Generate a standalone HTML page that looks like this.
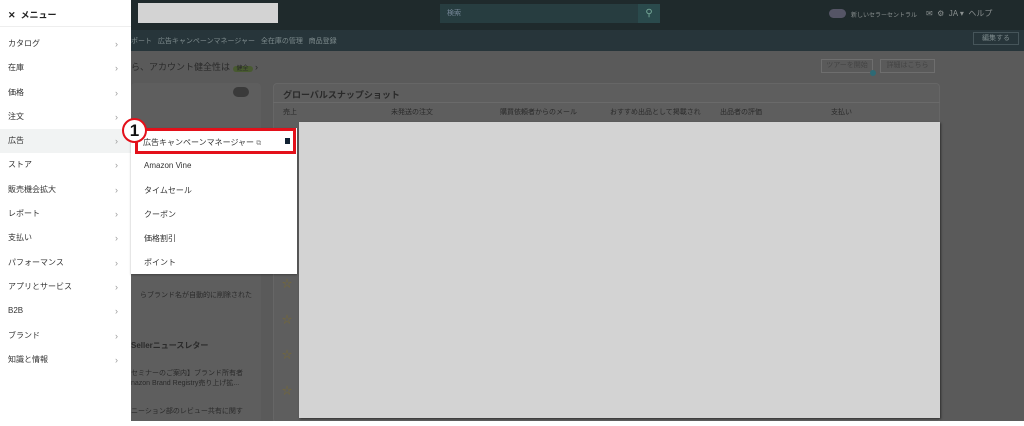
<!DOCTYPE html>
<html><head><meta charset="utf-8"><style>
*{margin:0;padding:0;box-sizing:border-box}
body{width:1024px;height:426px;overflow:hidden;background:#fff;font-family:"Liberation Sans","Noto Sans CJK JP",sans-serif;position:relative}
.a{position:absolute}
.t{color:#333;font-size:8px;white-space:nowrap}
.d{color:#2a2a2a;font-size:7px;white-space:nowrap}
</style></head><body>
<div class="a" style="left:0;top:0;width:1024px;height:30px;background:#1f2a2c"></div>
<div class="a" style="left:0;top:30px;width:1024px;height:21px;background:#27353a"></div>
<div class="a" style="left:0;top:51px;width:1024px;height:370px;background:#5a5a5a"></div>
<div class="a" style="left:138px;top:3px;width:140px;height:20px;background:#d3d3d3"></div>
<div class="a" style="left:440px;top:4px;width:198px;height:19px;background:#273d40"></div>
<div class="a" style="left:638px;top:4px;width:22px;height:19px;background:#2a4a4c;color:#7a9;font-size:10px;text-align:center;line-height:19px">⚲</div>
<div class="a t" style="left:447px;top:8px;color:#789;font-size:7px">検索</div>
<div class="a" style="left:829px;top:9px;width:17px;height:9px;border-radius:5px;background:#556"></div>
<div class="a t" style="left:851px;top:10px;color:#8a9090;font-size:6px">新しいセラーセントラル</div>
<div class="a t" style="left:926px;top:8px;color:#8a9090;font-size:8px">✉ &nbsp;⚙ &nbsp;JA ▾ &nbsp;ヘルプ</div>
<div class="a t" style="left:131px;top:36px;color:#7d8a8c;font-size:7px">ポート &nbsp; 広告キャンペーンマネージャー &nbsp; 全在庫の管理 &nbsp; 商品登録</div>
<div class="a" style="left:973px;top:32px;width:46px;height:13px;border:1px solid #46555a;color:#7d8a8c;font-size:7px;text-align:center;line-height:11px">編集する</div>
<div class="a t" style="left:131px;top:60px;color:#2a2a2a;font-size:9px">ら、アカウント健全性は <span style="background:#485a30;border-radius:6px;padding:0 4px;font-size:6px">健全</span> ›</div>
<div class="a" style="left:821px;top:59px;width:52px;height:14px;border:1px solid #6e6e6e;color:#444;font-size:7px;text-align:center;line-height:12px">ツアーを開始</div>
<div class="a" style="left:880px;top:59px;width:55px;height:14px;border:1px solid #6e6e6e;color:#444;font-size:7px;text-align:center;line-height:12px">詳細はこちら</div>
<div class="a" style="left:870px;top:70px;width:6px;height:6px;border-radius:50%;background:#2e6a75"></div>
<div class="a" style="left:131px;top:83px;width:130px;height:340px;background:#5e5e5e;border-radius:4px"></div>
<div class="a" style="left:273px;top:83px;width:667px;height:340px;background:#5e5e5e;border-radius:4px;border:1px solid #666"></div>
<div class="a t" style="left:283px;top:88px;color:#2a2a2a;font-size:9px;font-weight:bold">グローバルスナップショット</div>
<div class="a" style="left:273px;top:102px;width:667px;height:1px;background:#6a6a6a"></div>
<div class="a d" style="left:283px;top:107px">売上</div>
<div class="a d" style="left:391px;top:107px">未発送の注文</div>
<div class="a d" style="left:500px;top:107px">購買依頼者からのメール</div>
<div class="a d" style="left:610px;top:107px">おすすめ出品として掲載され</div>
<div class="a d" style="left:720px;top:107px">出品者の評価</div>
<div class="a d" style="left:831px;top:107px">支払い</div>
<div class="a" style="left:233px;top:87px;width:16px;height:10px;border-radius:5px;background:#3a3a3a"></div>
<div class="a d" style="left:140px;top:290px">らブランド名が自動的に削除された</div>
<div class="a d" style="left:131px;top:340px;font-weight:bold;font-size:8px">Sellerニュースレター</div>
<div class="a d" style="left:131px;top:368px">セミナーのご案内】ブランド所有者</div>
<div class="a d" style="left:131px;top:378px">nazon Brand Registry売り上げ拡...</div>
<div class="a d" style="left:131px;top:406px">ニーション部のレビュー共有に関す</div>
<div class="a" style="left:282px;top:275px;color:#7a6a30;font-size:10px">☆</div>
<div class="a" style="left:282px;top:311px;color:#7a6a30;font-size:10px">☆</div>
<div class="a" style="left:282px;top:346px;color:#7a6a30;font-size:10px">☆</div>
<div class="a" style="left:282px;top:382px;color:#7a6a30;font-size:10px">☆</div>
<div class="a" style="left:299px;top:122px;width:641px;height:296px;background:#d3d3d3;box-shadow:1px 1px 2px rgba(0,0,0,.5)"></div>
<div class="a" style="left:0;top:0;width:131px;height:426px;background:#fff"></div>
<div class="a" style="left:0;top:26px;width:131px;height:1px;background:#eee"></div>
<div class="a t" style="left:8px;top:8px;font-size:9px;font-weight:bold;color:#222">✕ &nbsp;メニュー</div>
<div class="a" style="left:0;top:129px;width:131px;height:24px;background:#f1f3f3"></div>
<div class="a" style="left:131px;top:128px;width:166px;height:146px;background:#fff;box-shadow:0 1px 2px rgba(0,0,0,.3)"></div>
<div class="a" style="left:135px;top:128px;width:161px;height:26px;border:3px solid #e3101a"></div>
<div class="a t" style="left:143px;top:137px">広告キャンペーンマネージャー <span style="font-size:7px;color:#888">⧉</span></div>
<div class="a" style="left:285px;top:138px;width:5px;height:6px;background:#123"></div>
<div class="a t" style="left:144px;top:161px">Amazon Vine</div>
<div class="a t" style="left:144px;top:185px">タイムセール</div>
<div class="a t" style="left:144px;top:209px">クーポン</div>
<div class="a t" style="left:144px;top:233px">価格割引</div>
<div class="a t" style="left:144px;top:257px">ポイント</div>
<div class="a" style="left:122px;top:118px;width:25px;height:25px;border-radius:50%;background:#fff;border:2px solid #e3101a;color:#111;font-weight:bold;font-size:17px;text-align:center;line-height:21px">1</div>
<div class="a" style="left:0;top:421px;width:1024px;height:5px;background:#fff"></div>
<div class="a t" style="left:8px;top:32px;line-height:24.3px;font-size:8px">カタログ<br>在庫<br>価格<br>注文<br>広告<br>ストア<br>販売機会拡大<br>レポート<br>支払い<br>パフォーマンス<br>アプリとサービス<br>B2B<br>ブランド<br>知識と情報</div>
<div class="a t" style="left:115px;top:32px;line-height:24.3px;font-size:9px;color:#999">›<br>›<br>›<br>›<br>›<br>›<br>›<br>›<br>›<br>›<br>›<br>›<br>›<br>›</div>
</body></html>
